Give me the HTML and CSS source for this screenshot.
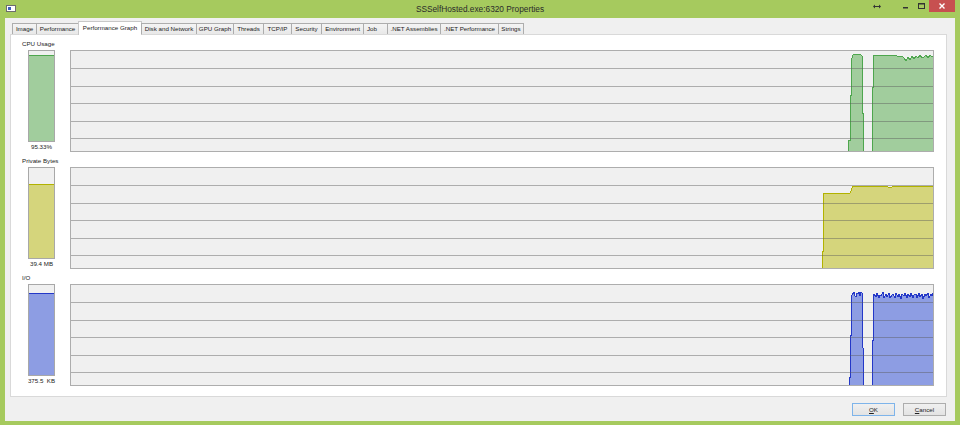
FILE: index.html
```html
<!DOCTYPE html>
<html lang="en">
<head>
    <meta charset="UTF-8">
    <title>SSSelfHosted.exe:6320 Properties</title>
    <link rel="stylesheet" href="styles.css">
</head>
<body>
    <div class="window">
        <div class="titlebar">
            <div class="titlebar-left">
                <svg class="app-icon" width="10" height="7" viewBox="0 0 10 7">
                    <rect x="0.5" y="0.5" width="9" height="6" fill="#fff" stroke="#6d6d6d"/>
                    <rect x="2" y="2" width="3" height="3" fill="#3d5fb8"/>
                </svg>
            </div>
            <div class="title">SSSelfHosted.exe:6320 Properties</div>
            <div class="caption-buttons">
                <div class="caption-btn pin">
                    <svg width="18" height="12" viewBox="0 0 18 12">
                        <path d="M6 6.5h6" stroke="#333" stroke-width="1"/>
                        <path d="M5 6.5l2-2v4z M13 6.5l-2-2v4z" fill="#333"/>
                    </svg>
                </div>
                <div class="caption-btn min">
                    <svg width="16" height="12" viewBox="0 0 16 12">
                        <rect x="6" y="7" width="5" height="1.5" fill="#333"/>
                    </svg>
                </div>
                <div class="caption-btn max">
                    <svg width="16" height="12" viewBox="0 0 16 12">
                        <rect x="5.5" y="3.5" width="6" height="5" fill="none" stroke="#333"/>
                        <rect x="5" y="3" width="7" height="1.5" fill="#333"/>
                    </svg>
                </div>
                <div class="caption-btn close">
                    <svg width="26" height="12" viewBox="0 0 26 12">
                        <path d="M10.5 3.5l5 5M15.5 3.5l-5 5" stroke="#fff" stroke-width="1.4"/>
                    </svg>
                </div>
            </div>
        </div>

        <div class="client">
            <div class="tabs">
                <div class="tab">Image</div>
                <div class="tab">Performance</div>
                <div class="tab active">Performance Graph</div>
                <div class="tab">Disk and Network</div>
                <div class="tab">GPU Graph</div>
                <div class="tab">Threads</div>
                <div class="tab">TCP/IP</div>
                <div class="tab">Security</div>
                <div class="tab">Environment</div>
                <div class="tab tab-left">Job</div>
                <div class="tab">.NET Assemblies</div>
                <div class="tab">.NET Performance</div>
                <div class="tab">Strings</div>
            </div>

            <div class="page">
                <div class="panel">
                    <div class="panel-label">CPU Usage</div>
                    <div class="panel-body">
                        <div class="meter-col">
                            <div class="meter"><div class="meter-fill cpu" style="height: 95.33%"></div></div>
                            <div class="meter-value">95.33%</div>
                        </div>
                        <div class="graph">
                            <svg width="862" height="100" viewBox="0 0 862 100">
                                <polygon class="area cpu" points="777,100 777,89 779,89 779,44 780,44 780,10 782,4 784,3 786,4 788,3 790,4 791,5 791,62 792,62 792,100"/>
                                <polygon class="area cpu" points="801,100 801,36 802,36 802,5 803,4 806,4 810,4 814,5 818,4 822,4 826,5 829,6 831,5 833,7 835,10 837,6 839,9 841,5 843,8 845,5 847,7 849,4 851,7 853,6 855,4 857,7 859,4 861,6 862,5 862,100"/>
                                <polyline class="edge cpu" points="777,100 777,89 779,89 779,44 780,44 780,10 782,4 784,3 786,4 788,3 790,4 791,5 791,62 792,62 792,100"/>
                                <polyline class="edge cpu" points="801,100 801,36 802,36 802,5 803,4 806,4 810,4 814,5 818,4 822,4 826,5 829,6 831,5 833,7 835,10 837,6 839,9 841,5 843,8 845,5 847,7 849,4 851,7 853,6 855,4 857,7 859,4 861,6 862,5"/>
                                <g class="grid">
                                    <line x1="0" y1="17.5" x2="862" y2="17.5"/>
                                    <line x1="0" y1="35.5" x2="862" y2="35.5"/>
                                    <line x1="0" y1="52.5" x2="862" y2="52.5"/>
                                    <line x1="0" y1="70.5" x2="862" y2="70.5"/>
                                    <line x1="0" y1="87.5" x2="862" y2="87.5"/>
                                </g>
                            </svg>
                        </div>
                    </div>
                </div>

                <div class="panel">
                    <div class="panel-label">Private Bytes</div>
                    <div class="panel-body">
                        <div class="meter-col">
                            <div class="meter"><div class="meter-fill bytes" style="height: 82%"></div></div>
                            <div class="meter-value">39.4 MB</div>
                        </div>
                        <div class="graph">
                            <svg width="862" height="100" viewBox="0 0 862 100">
                                <polygon class="area bytes" points="751,100 751,83 752,83 752,25 779,25 782,18 815,18 817,19 821,19 823,18 862,18 862,100"/>
                                <polyline class="edge bytes" points="751,100 751,83 752,83 752,25 779,25 782,18 815,18 817,19 821,19 823,18 862,18"/>
                                <g class="grid">
                                    <line x1="0" y1="17.5" x2="862" y2="17.5"/>
                                    <line x1="0" y1="35.5" x2="862" y2="35.5"/>
                                    <line x1="0" y1="52.5" x2="862" y2="52.5"/>
                                    <line x1="0" y1="70.5" x2="862" y2="70.5"/>
                                    <line x1="0" y1="87.5" x2="862" y2="87.5"/>
                                </g>
                            </svg>
                        </div>
                    </div>
                </div>

                <div class="panel">
                    <div class="panel-label">I/O</div>
                    <div class="panel-body">
                        <div class="meter-col">
                            <div class="meter"><div class="meter-fill io" style="height: 91%"></div></div>
                            <div class="meter-value">375.5&nbsp; KB</div>
                        </div>
                        <div class="graph">
                            <svg width="862" height="100" viewBox="0 0 862 100">
                                <polygon class="area io" points="778,100 778,92 779,92 779,50 780,50 780,15 781,10 783,7 784,11 785,12 786,8 787,9 788,7 789,11 790,7 791,8 791,38 792,63 792,100"/>
                                <polygon class="area io" points="801,100 801,55 802,55 802,14 803,9 805,12 806,8 808,13 809,10 810,11 812,7 813,13 815,9 816,12 818,8 819,13 821,10 822,9 824,13 825,8 827,12 828,9 830,14 831,9 833,11 834,8 836,13 837,9 839,12 840,8 842,13 843,10 845,9 846,13 848,8 849,12 851,9 852,14 854,9 855,11 857,8 858,13 860,9 861,11 862,8 862,100"/>
                                <polyline class="edge io" points="778,100 778,92 779,92 779,50 780,50 780,15 781,10 783,7 784,11 785,12 786,8 787,9 788,7 789,11 790,7 791,8 791,38 792,63 792,100"/>
                                <polyline class="edge io" points="801,100 801,55 802,55 802,14 803,9 805,12 806,8 808,13 809,10 810,11 812,7 813,13 815,9 816,12 818,8 819,13 821,10 822,9 824,13 825,8 827,12 828,9 830,14 831,9 833,11 834,8 836,13 837,9 839,12 840,8 842,13 843,10 845,9 846,13 848,8 849,12 851,9 852,14 854,9 855,11 857,8 858,13 860,9 861,11 862,8"/>
                                <g class="grid">
                                    <line x1="0" y1="17.5" x2="862" y2="17.5"/>
                                    <line x1="0" y1="35.5" x2="862" y2="35.5"/>
                                    <line x1="0" y1="52.5" x2="862" y2="52.5"/>
                                    <line x1="0" y1="70.5" x2="862" y2="70.5"/>
                                    <line x1="0" y1="87.5" x2="862" y2="87.5"/>
                                </g>
                            </svg>
                        </div>
                    </div>
                </div>
            </div>

            <div class="dialog-buttons">
                <div class="btn default"><span class="accel">O</span>K</div>
                <div class="btn"><span class="accel">C</span>ancel</div>
            </div>
        </div>
    </div>
</body>
</html>
```

FILE: styles.css
```css
* {
    box-sizing: border-box;
}
body {
    margin: 0;
    background-color: #a6ca5e;
    font-family: "Liberation Sans", Arial, sans-serif;
    color: #222;
}
.window {
    width: 960px;
    height: 425px;
    display: flex;
    flex-direction: column;
    padding: 0 5px 4px 5px;
}

/* title bar */
.titlebar {
    height: 18px;
    display: grid;
    grid-template-columns: 1fr auto 1fr;
    align-items: start;
}
.app-icon {
    display: block;
    margin: 5px 0 0 1px;
}
.title {
    font-size: 8.3px;
    line-height: 18px;
    color: #2b2b2b;
    white-space: nowrap;
}
.caption-buttons {
    justify-self: end;
    display: flex;
    height: 12px;
}
.caption-btn {
    height: 12px;
}
.caption-btn svg {
    display: block;
}
.pin {
    width: 18px;
    margin-right: 11px;
}
.min,
.max {
    width: 16px;
}
.close {
    width: 26px;
    background-color: #c75050;
}

/* client area */
.client {
    flex: 1;
    background-color: #f0f0f0;
    padding: 3px 8px 5px 5px;
    display: flex;
    flex-direction: column;
}
.tabs {
    display: flex;
    align-items: flex-end;
    height: 13px;
    padding-left: 2px;
    position: relative;
    z-index: 1;
}
.tab {
    height: 11px;
    border: 1px solid #adadad;
    border-bottom: none;
    margin-left: -1px;
    background: linear-gradient(#f4f4f4, #e8e8e8);
    font-size: 6.2px;
    line-height: 10px;
    display: flex;
    justify-content: center;
    white-space: nowrap;
}
.tab:first-child {
    margin-left: 0;
}
.tab.active {
    height: 14px;
    margin-bottom: -1px;
    background: #fff;
    border-color: #c8c8c8;
    line-height: 12px;
}
.tab-left {
    justify-content: flex-start;
    padding-left: 3px;
}
.tab:nth-child(1) { width: 25px; }
.tab:nth-child(2) { width: 43px; }
.tab:nth-child(3) { width: 64px; }
.tab:nth-child(4) { width: 56px; }
.tab:nth-child(5) { width: 38px; }
.tab:nth-child(6) { width: 31px; }
.tab:nth-child(7) { width: 29px; }
.tab:nth-child(8) { width: 31px; }
.tab:nth-child(9) { width: 43px; }
.tab:nth-child(10) { width: 25px; }
.tab:nth-child(11) { width: 54px; }
.tab:nth-child(12) { width: 59px; }
.tab:nth-child(13) { width: 26px; }

.page {
    height: 363px;
    background-color: #fff;
    border: 1px solid #d9d9d9;
    padding: 0 12px 0 11px;
}
.panel-label {
    height: 15px;
    display: flex;
    align-items: flex-end;
    padding-bottom: 2px;
    font-size: 6.2px;
    line-height: 8px;
}
.panel-body {
    display: flex;
    height: 102px;
}
.meter-col {
    width: 39px;
    display: flex;
    flex-direction: column;
    align-items: center;
}
.meter {
    width: 27px;
    height: 92px;
    border: 1px solid #a8a8a8;
    background-color: #f0f0f0;
    display: flex;
    align-items: flex-end;
}
.meter-fill {
    width: 100%;
    border-top: 1px solid;
}
.meter-fill.cpu {
    background-color: #a1cd9d;
    border-color: #4ea64e;
}
.meter-fill.bytes {
    background-color: #d5d57c;
    border-color: #b2b200;
}
.meter-fill.io {
    background-color: #8d9de3;
    border-color: #2438c8;
}
.meter-value {
    font-size: 6.2px;
    line-height: 10px;
    white-space: nowrap;
}
.graph {
    flex: 1;
    margin-left: 9px;
    border: 1px solid #adadad;
    background-color: #f0f0f0;
}
.graph svg {
    display: block;
}
.area {
    stroke: none;
}
.area.cpu { fill: #a1cd9d; }
.area.bytes { fill: #d5d57c; }
.area.io { fill: #8d9de3; }
.edge {
    fill: none;
    stroke-width: 1;
    shape-rendering: crispEdges;
}
.edge.cpu { stroke: #4ea64e; }
.edge.bytes { stroke: #b2b200; }
.edge.io { stroke: #2438c8; }
.grid line {
    stroke: rgba(90, 90, 90, 0.45);
    stroke-width: 1;
}

/* OK / Cancel */
.dialog-buttons {
    display: flex;
    justify-content: flex-end;
    gap: 8px;
    margin-top: 6px;
    height: 13px;
    padding-right: 1px;
}
.btn {
    width: 43px;
    height: 13px;
    border: 1px solid #adadad;
    background: linear-gradient(#f0f0f0, #e3e3e3);
    font-size: 6.2px;
    line-height: 11px;
    text-align: center;
}
.btn.default {
    border-color: #7eb4ea;
}
.accel {
    text-decoration: underline;
}
```
